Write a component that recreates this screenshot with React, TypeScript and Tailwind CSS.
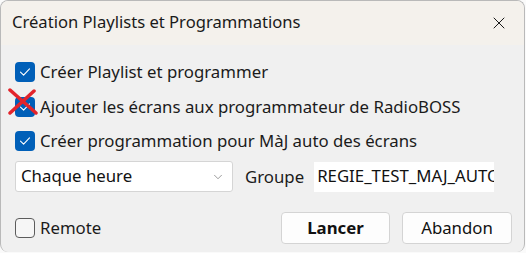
import { ChevronDown, X } from 'lucide-react';

const font = { fontFamily: '"Noto Sans", "Open Sans", sans-serif' };

function CheckBox({ checked }: { checked: boolean }) {
  if (!checked) {
    return <span className="block w-[20px] h-[20px] shrink-0 rounded-[4px] border border-[#5c5c5c] bg-[#f6f6f6]" />;
  }
  return (
    <span className="flex items-center justify-center w-[20px] h-[20px] shrink-0 rounded-[4px] bg-[#005fb8]">
      <svg width="12" height="10" viewBox="0 0 12 10" fill="none">
        <path d="M1.5 5.2 L4.6 8.2 L10.5 1.8" stroke="white" strokeWidth="1.1" strokeLinecap="round" strokeLinejoin="round" />
      </svg>
    </span>
  );
}

function CheckRow({ checked, label }: { checked: boolean; label: string }) {
  return (
    <div className="flex items-center gap-[5px] h-[20px]">
      <CheckBox checked={checked} />
      <span className="text-[16.8px] text-[#1b1b1b] leading-none">{label}</span>
    </div>
  );
}

export default function App() {
  return (
    <div className="w-[526px] h-[253px] bg-[#fafafa] overflow-hidden" style={font}>
      <div className="w-[525px] h-[252px] flex flex-col rounded-[8px] border-t border-l border-r border-[#b9b9b9] overflow-hidden bg-[#f0f0f0]">
        {/* Title bar */}
        <div className="h-[44px] shrink-0 flex items-center justify-between bg-[#f4f1ec] pl-[11px] pr-[15px]">
          <span className="text-[16.6px] text-[#1a1a1a] pb-[1px]">Création Playlists et Programmations</span>
          <X size={20} strokeWidth={1.2} className="text-[#1a1a1a]" />
        </div>

        {/* Body */}
        <div className="flex-1 flex flex-col pl-[14px] pr-[12px] pt-[17px]">
          <CheckRow checked label="Créer Playlist et programmer" />
          <div className="relative mt-[15px]">
            <CheckRow checked label="Ajouter les écrans aux programmateur de RadioBOSS" />
            <svg className="absolute left-[-7px] top-[-9px]" width="30" height="28" viewBox="0 0 30 28">
              <path d="M2 2 L28 25" stroke="#e3242b" strokeWidth="3.5" strokeLinecap="round" />
              <path d="M2 25 L26 3" stroke="#e3242b" strokeWidth="3.5" strokeLinecap="round" />
            </svg>
          </div>
          <div className="mt-[14px]">
            <CheckRow checked label="Créer programmation pour MàJ auto des écrans" />
          </div>

          <div className="flex items-center mt-[10px] h-[31px]">
            <div className="w-[218px] h-[31px] flex items-center justify-between bg-white border border-[#d5d5d5] rounded-[3px] pl-[5px] pr-[7px]">
              <span className="text-[16.8px] text-[#111] leading-none">Chaque heure</span>
              <ChevronDown size={14} strokeWidth={1.1} className="text-[#666]" />
            </div>
            <span className="ml-[12px] text-[16.8px] text-[#1b1b1b]">Groupe</span>
            <div className="ml-[10px] w-[180px] h-[30px] bg-white overflow-hidden flex items-center pl-[3px]">
              <span className="text-[16.8px] text-[#111] whitespace-nowrap leading-none">REGIE_TEST_MAJ_AUTO</span>
            </div>
          </div>

          <div className="flex items-center justify-between mt-[20px] h-[32px]">
            <div className="flex items-center gap-[5px]">
              <CheckBox checked={false} />
              <span className="text-[16.8px] text-[#1b1b1b] leading-none">Remote</span>
            </div>
            <div className="flex gap-[12px]">
              <button className="w-[109px] h-[32px] bg-[#fdfdfd] border border-[#d4d4d4] rounded-[4px] text-[16.8px] font-bold text-[#111]">Lancer</button>
              <button className="w-[110px] h-[32px] bg-[#fdfdfd] border border-[#d4d4d4] rounded-[4px] text-[16.8px] text-[#111]">Abandon</button>
            </div>
          </div>
        </div>
      </div>
    </div>
  );
}
